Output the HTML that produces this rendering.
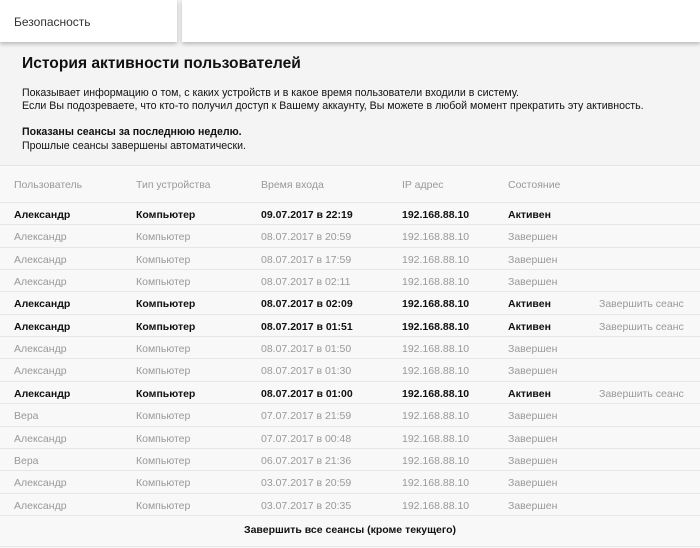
<!DOCTYPE html>
<html><head><meta charset="utf-8"><style>
body{margin:0;width:700px;height:547px;background:#f4f4f4;font-family:"Liberation Sans","DejaVu Sans",sans-serif;position:relative;overflow:hidden;color:#111}
.tab{position:absolute;top:0;height:42px;background:#fff;box-shadow:0 2px 4px rgba(0,0,0,.25)}
.t{position:absolute;white-space:nowrap;font-size:10.6px}
.row{position:absolute;left:0;width:700px;height:22px;border-top:1px solid #e6e6e6;background:#f8f8f8}
.row span{position:absolute;top:6px;font-size:10.5px;white-space:nowrap}
.a span{color:#111;font-weight:bold}
.g span{color:#999}
.row span.e{color:#999;font-weight:normal}
</style></head><body>
<div class="tab" style="left:0;width:177px"><div class="t" style="left:14px;top:15px;font-size:12px;color:#333">Безопасность</div></div>
<div class="tab" style="left:182px;width:518px"></div>
<div class="t" style="left:22px;top:55px;font-size:15.6px;font-weight:bold;color:#111">История активности пользователей</div>
<div class="t" style="left:22px;top:87px">Показывает информацию о том, с каких устройств и в какое время пользователи входили в систему.</div>
<div class="t" style="left:22px;top:100px">Если Вы подозреваете, что кто-то получил доступ к Вашему аккаунту, Вы можете в любой момент прекратить эту активность.</div>
<div class="t" style="left:22px;top:126px;font-weight:bold">Показаны сеансы за последнюю неделю.</div>
<div class="t" style="left:22px;top:140px">Прошлые сеансы завершены автоматически.</div>
<div style="position:absolute;left:0;top:165px;width:700px;height:382px;background:#f8f8f8;border-top:1px solid #e6e6e6"></div>
<div class="row g" style="top:172px;border:none;background:none"><span style="left:14px;top:7px">Пользователь</span><span style="left:136px;top:7px">Тип устройства</span><span style="left:261px;top:7px">Время входа</span><span style="left:402px;top:7px">IP адрес</span><span style="left:508px;top:7px">Состояние</span></div>
<div id="rows"></div>
<script>
var d=[["Александр","09.07.2017 в 22:19",1,0],["Александр","08.07.2017 в 20:59",0],["Александр","08.07.2017 в 17:59",0],["Александр","08.07.2017 в 02:11",0],["Александр","08.07.2017 в 02:09",1,1],["Александр","08.07.2017 в 01:51",1,1],["Александр","08.07.2017 в 01:50",0],["Александр","08.07.2017 в 01:30",0],["Александр","08.07.2017 в 01:00",1,1],["Вера","07.07.2017 в 21:59",0],["Александр","07.07.2017 в 00:48",0],["Вера","06.07.2017 в 21:36",0],["Александр","03.07.2017 в 20:59",0],["Александр","03.07.2017 в 20:35",0]];
var h="";d.forEach(function(r,i){var top=202+i*22.35;h+='<div class="row '+(r[2]?'a':'g')+'" style="top:'+top+'px"><span style="left:14px">'+r[0]+'</span><span style="left:136px">Компьютер</span><span style="left:261px">'+r[1]+'</span><span style="left:402px">192.168.88.10</span><span style="left:508px">'+(r[2]?'Активен':'Завершен')+'</span>'+(r[3]?'<span class="e" style="left:599px">Завершить сеанс</span>':'')+'</div>';});
h+='<div class="row" style="top:515px;height:30px;border-bottom:1px solid #e6e6e6"><span style="left:0;width:700px;text-align:center;top:8px;font-weight:bold;color:#111">Завершить все сеансы (кроме текущего)</span></div>';
document.getElementById("rows").innerHTML=h;
</script>
</body></html>
